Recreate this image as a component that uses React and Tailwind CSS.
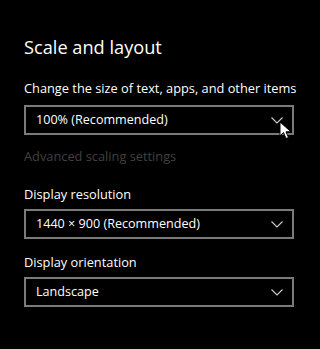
import React from "react";

const Chevron = () => (
  <svg width="12" height="7" viewBox="0 0 12 7" className="shrink-0">
    <path d="M0.5 0.5 L6 6 L11.5 0.5" fill="none" stroke="#cfcfcf" strokeWidth="1.1" />
  </svg>
);

const Select = ({ value, children }) => (
  <div className="relative flex h-[30px] w-[270px] items-center justify-between border-2 border-[#7a7a7a] pl-[10px] pr-[9px]">
    <span className="text-[12.6px] leading-none text-white">{value}</span>
    <Chevron />
    {children}
  </div>
);

export default function App() {
  return (
    <div
      className="h-[349px] w-[320px] bg-black pl-[24px] pt-[34px]"
      style={{ fontFamily: '"Open Sans", "Noto Sans", sans-serif' }}
    >
      <h1 className="text-[18.2px] leading-[26px] text-white">Scale and layout</h1>
      <div className="mt-[19px] text-[12.8px] leading-[18px] text-white">
        Change the size of text, apps, and other items
      </div>
      <div className="mt-[8px]">
        <Select value="100% (Recommended)">
          <svg
            width="14"
            height="20"
            viewBox="0 0 14 20"
            className="absolute left-[253px] top-[14px]"
          >
            <path
              d="M1 1 L1 15 L4.5 11.5 L7 17.5 L9.5 16.5 L7 10.8 L12 10.8 Z"
              fill="#fff"
              stroke="#000"
              strokeWidth="1"
              strokeLinejoin="round"
            />
          </svg>
        </Select>
      </div>
      <div className="mt-[12px] text-[12.8px] leading-[18px] text-[#404040]">
        Advanced scaling settings
      </div>
      <div className="mt-[20px] text-[12.8px] leading-[18px] text-white">Display resolution</div>
      <div className="mt-[6px]">
        <Select value="1440 × 900 (Recommended)" />
      </div>
      <div className="mt-[14px] text-[12.8px] leading-[18px] text-white">Display orientation</div>
      <div className="mt-[6px]">
        <Select value="Landscape" />
      </div>
    </div>
  );
}
